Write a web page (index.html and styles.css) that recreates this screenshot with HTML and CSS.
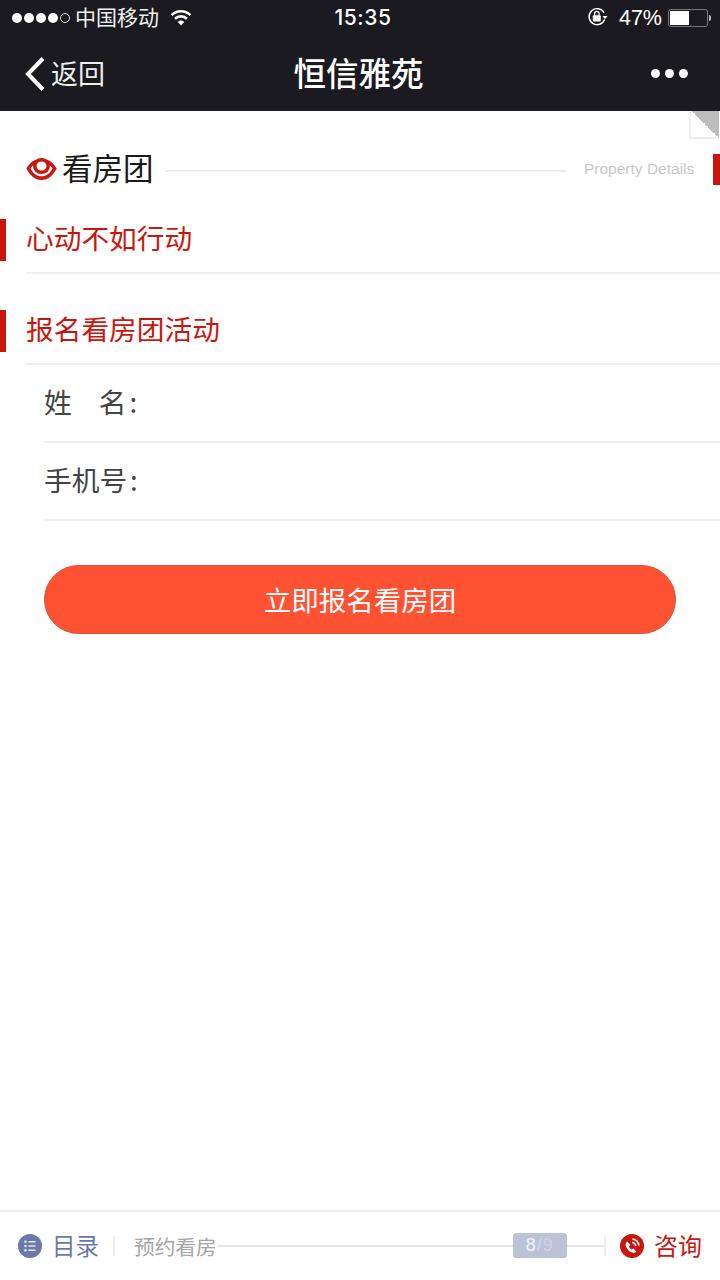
FILE: index.html
```html
<!DOCTYPE html>
<html lang="zh">
<head>
<meta charset="utf-8">
<title>恒信雅苑</title>
<link rel="stylesheet" href="styles.css">
</head>
<body>
<div class="page">
  <header class="top">
    <div class="status">
      <div class="status-left">
        <span class="signal"><i></i><i></i><i></i><i></i><i class="off"></i></span>
        <span class="carrier">中国移动</span>
        <svg class="wifi" width="22" height="17" viewBox="0 0 22 17"><path d="M1.500 6.200a13.500 13.500 0 0 1 19 0" fill="none" stroke="#fff" stroke-width="2.600"/><path d="M5 9.800a8.600 8.600 0 0 1 12 0" fill="none" stroke="#fff" stroke-width="2.600"/><path d="M7.800 13a4.200 4.200 0 0 1 6.400 0l-3.200 3.600z" fill="#fff"/></svg>
      </div>
      <div class="clock">15:35</div>
      <div class="status-right">
        <svg class="lock" width="22" height="20" viewBox="0 0 22 20"><path d="M17.600 12.500A8 8 0 1 1 17 5.600" fill="none" stroke="#fff" stroke-width="1.400"/><path d="M15.500 9h5l-2.500 3.200z" fill="#fff"/><rect x="5.800" y="8.200" width="8" height="6.200" rx="1" fill="#fff"/><path d="M7.600 8.400V6.600a2.200 2.200 0 0 1 4.400 0v1.800" fill="none" stroke="#fff" stroke-width="1.300"/></svg>
        <span class="pct">47%</span>
        <span class="battery"><span class="battery-fill"></span></span><span class="battery-tip"></span>
      </div>
    </div>
    <nav class="nav">
      <div class="back">
        <svg width="22" height="36" viewBox="0 0 22 36"><path d="M19 2.500 4 18l15 15.500" fill="none" stroke="#fff" stroke-width="4"/></svg>
        <span class="back-text">返回</span>
      </div>
      <div class="title">恒信雅苑</div>
      <div class="more"><i></i><i></i><i></i></div>
    </nav>
  </header>

  <main class="content">
    <div class="fold"></div>
    <div class="head">
      <svg class="eye" width="31" height="24" viewBox="0 0 31 24"><path d="M.3 11.500C3 7 6 4 9.500 3L15.500 1.500 21.500 3C25 4 28 7 30.700 11.500 27 18.500 22 23 15.500 23S4 18.500 .3 11.500z" fill="#c9170f"/><path d="M4.500 11.500C7 16.500 11 19.300 15.500 19.300S24 16.500 26.500 11.500C24 8 20 5 15.500 5S7 8 4.500 11.500z" fill="#fff"/><ellipse cx="15.500" cy="9" rx="8.500" ry="8" fill="#c9170f"/><ellipse cx="15.500" cy="9" rx="5" ry="4.500" fill="#fff"/></svg>
      <h1 class="head-title">看房团</h1>
      <span class="head-line"></span>
      <span class="head-en">Property Details</span>
      <span class="head-mark"></span>
    </div>

    <section class="sec sec-first">
      <span class="sec-bar"></span>
      <h2 class="sec-text">心动不如行动</h2>
    </section>
    <section class="sec sec-second">
      <span class="sec-bar"></span>
      <h2 class="sec-text">报名看房团活动</h2>
    </section>

    <form class="form">
      <div class="field"><span class="label">姓<span class="gap"></span>名<span class="colon">:</span></span></div>
      <div class="field"><span class="label">手机号<span class="colon">:</span></span></div>
      <button class="submit" type="button">立即报名看房团</button>
    </form>
  </main>

  <footer class="foot">
    <div class="menu">
      <svg width="24" height="24" viewBox="0 0 24 24"><circle cx="12" cy="12" r="12" fill="#6a79aa"/><g fill="#dfe3ee"><circle cx="7.500" cy="7.800" r="1.300"/><circle cx="7.500" cy="12" r="1.300"/><circle cx="7.500" cy="16.200" r="1.300"/><rect x="10.500" y="7" width="7" height="1.600"/><rect x="10.500" y="11.200" width="7" height="1.600"/><rect x="10.500" y="15.400" width="7" height="1.600"/></g></svg>
      <span class="menu-text">目录</span>
    </div>
    <span class="sep sep-a"></span>
    <span class="foot-label">预约看房</span>
    <div class="track"><span class="thumb"><b>8</b>/9</span></div>
    <span class="sep"></span>
    <div class="ask">
      <svg width="24" height="24" viewBox="0 0 24 24"><circle cx="12" cy="12" r="12" fill="#c9170f"/><path d="M7.500 7.500c-2 1.200-2.400 3-1.300 5.400 1.200 2.700 3.200 4.600 5.800 5.600 1.900.7 3.500.2 4.200-1.300l-2.800-2.600-1.600 1c-1.300-.7-2.300-1.800-2.800-3.200l1.200-1.400z" fill="#fff"/><path d="M12 8.500a3.800 3.800 0 0 1 3.600 3.600M12.500 5.200a6.800 6.800 0 0 1 6.300 6.300" fill="none" stroke="#fff" stroke-width="1.700"/></svg>
      <span class="ask-text">咨询</span>
    </div>
  </footer>
</div>
</body>
</html>
```

FILE: styles.css
```css
* { box-sizing: border-box; }
html, body { margin: 0; padding: 0; background: #fff; }
body { font-family: "Noto Sans CJK SC", "Liberation Sans", sans-serif; }
.page { width: 720px; height: 1280px; display: flex; flex-direction: column; overflow: hidden; }

.top { height: 111px; background: #1a1a20; color: #fff; flex: none; }
.status { height: 36px; display: grid; grid-template-columns: 1fr auto 1fr; align-items: center; padding: 0 9px 0 12px; }
.status-left, .status-right { display: flex; align-items: center; }
.status-right { justify-content: flex-end; }
.signal { display: flex; gap: 2px; }
.signal i { width: 10px; height: 10px; border-radius: 50%; background: #fff; }
.signal i.off { background: none; border: 1px solid #ddd; }
.carrier { font-size: 21px; line-height: 32px; margin-left: 5px; padding-bottom: 4px; color: #f0f0f0; }
.wifi { margin-left: 11px; margin-top: -2px; }
.clock { font-family: Inter, "Liberation Sans", sans-serif; font-weight: 500; font-size: 21px; letter-spacing: .6px; line-height: 36px; margin-left: 3px; }
.lock { margin-right: 10px; margin-top: -2px; }
.pct { font-family: "Liberation Sans", sans-serif; font-size: 21.500px; line-height: 36px; margin-right: 6px; }
.battery { width: 40px; height: 18px; border: 1px solid #77777b; border-radius: 3px; padding: 1px; display: block; }
.battery-fill { display: block; width: 19px; height: 100%; background: #fff; }
.battery-tip { width: 2px; height: 6px; background: #bbb; margin-left: 1px; border-radius: 0 2px 2px 0; }

.nav { height: 75px; position: relative; display: flex; align-items: center; justify-content: space-between; padding: 0 32px 0 24px; }
.back { display: flex; align-items: center; }
.back svg { display: block; }
.back-text { font-size: 27px; line-height: 34px; margin-left: 5px; padding-bottom: 2px; color: #eee; }
.title { position: absolute; left: 0; right: 3px; top: 15px; text-align: center; font-size: 32.500px; line-height: 42px; font-weight: 500; pointer-events: none; }
.more { display: flex; gap: 5px; }
.more i { width: 9px; height: 9px; border-radius: 50%; background: #fff; }

.content { flex: 1; position: relative; }
.fold { position: absolute; top: 0; right: 1px; width: 30px; height: 28px; background: linear-gradient(45deg, #fff 50%, #bdbdbd 50%); border-left: 2px solid #f0f0f0; border-bottom: 2px solid #ececec; }

.head { display: flex; align-items: center; height: 34px; margin-top: 41px; padding-left: 26px; }
.eye { flex: none; display: block; margin-top: -1px; margin-right: 4px; }
.head-title { flex: none; margin: 0 0 0 1px; padding-bottom: 4px; font-size: 30.500px; font-weight: 400; line-height: 30px; color: #1a1a1a; }
.head-line { flex: none; width: 402px; height: 2px; background: #eeeeee; margin: 4px 17px 0 11.500px; }
.head-en { flex: none; font-family: "Liberation Sans", sans-serif; font-size: 15.500px; color: #c8c8c8; white-space: nowrap; width: 129px; }
.head-mark { flex: none; width: 7px; height: 31px; background: #c9170f; }

.sec { display: flex; }
.sec-first { margin-top: 33px; }
.sec-second { margin-top: 36px; }
.sec-bar { width: 6px; height: 42px; background: #c9170f; margin-right: 20px; flex: none; }
.sec-text { flex: 1; margin: 0; height: 55px; border-bottom: 2px solid #f0f0f0; font-size: 27.700px; font-weight: 400; line-height: 36px; color: #c9170f; }

.form { padding-left: 44px; padding-right: 44px; }
.field { height: 78px; margin-right: -44px; border-bottom: 2px solid #f0f0f0; display: flex; align-items: center; padding-bottom: 4px; }
.label { font-size: 27.700px; line-height: 40px; color: #444; display: flex; }
.gap { width: 27px; }
.colon { margin-left: 3px; }
.submit { display: block; width: 632px; height: 69px; margin-top: 44px; border: 1px solid #d9503a; border-radius: 35px; background: #ff5233; color: #fff; font-family: inherit; font-size: 27.500px; padding: 0 0 2px; }

.foot { height: 70px; flex: none; border-top: 2px solid #f0f0f0; display: flex; align-items: center; padding-left: 18px; padding-right: 18px; }
.menu, .ask { display: flex; align-items: center; }
.menu svg, .ask svg { display: block; }
.menu-text { font-size: 23.500px; line-height: 32px; padding-bottom: 3px; color: #6a79aa; margin-left: 10px; }
.sep { width: 2px; height: 20px; background: #eeeeee; flex: none; }
.sep-a { margin-left: 14px; margin-right: 19px; }
.foot-label { font-size: 20.700px; line-height: 30px; padding-bottom: 1px; color: #a5a5a5; white-space: nowrap; }
.track { flex: 1; height: 2px; background: #e8e8e8; position: relative; }
.thumb { position: absolute; left: 296px; top: -12px; width: 54px; height: 25px; border-radius: 3px; background: #bcc3d8; color: #cfd4e2; font-family: "Liberation Sans", sans-serif; font-size: 18px; letter-spacing: 1px; line-height: 25px; text-align: center; }
.thumb b { font-weight: 400; color: #f2f3f7; }
.ask { margin-left: 14px; }
.ask-text { font-size: 24px; line-height: 32px; padding-bottom: 3px; color: #c9170f; margin-left: 10px; }
```
